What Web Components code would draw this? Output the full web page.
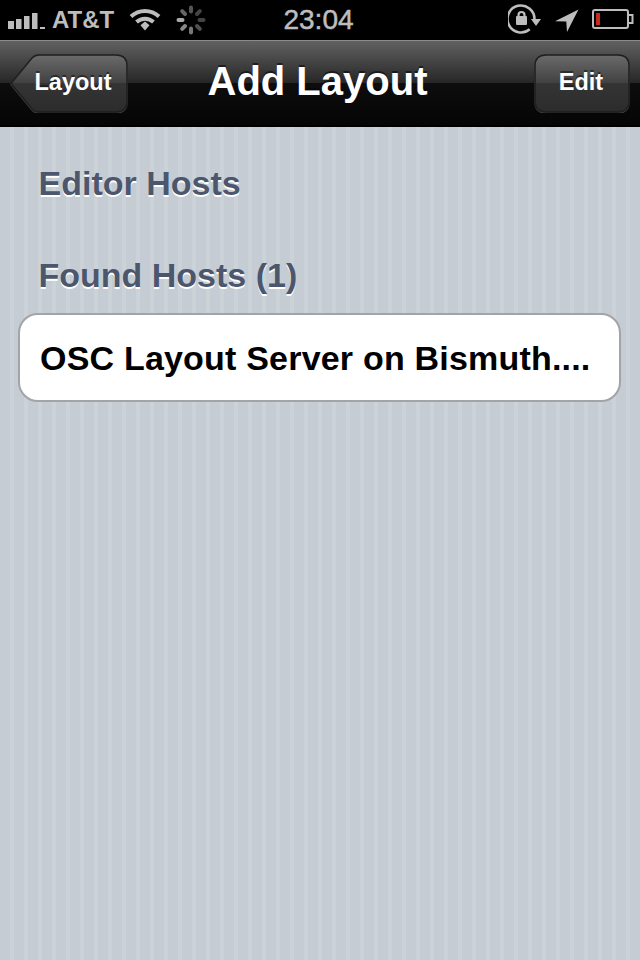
<!DOCTYPE html>
<html lang="en">
<head>
<meta charset="utf-8">
<title>Add Layout</title>
<style>
  html, body { margin: 0; background: #c5ccd4; font-family: "Liberation Sans", Arial, sans-serif; }
</style>
</head>
<body>
<app-screen>
  <status-bar carrier="AT&amp;T" time="23:04"></status-bar>
  <nav-bar heading="Add Layout">
    <bar-button slot="left" back>Layout</bar-button>
    <bar-button slot="right">Edit</bar-button>
  </nav-bar>
  <host-list>
    <section-header>Editor Hosts</section-header>
    <section-header>Found Hosts (1)</section-header>
    <table-cell>OSC Layout Server on Bismuth....</table-cell>
  </host-list>
</app-screen>

<script>
class AppScreen extends HTMLElement {
  constructor() {
    super();
    this.attachShadow({ mode: 'open' });
    this.shadowRoot.innerHTML = /* html */`
    <style>
      :host {
        display: flex;
        flex-direction: column;
        width: 640px;
        height: 960px;
        overflow: hidden;
      }
    </style>
    <slot></slot>`;
  }
}

class StatusBar extends HTMLElement {
  constructor() {
    super();
    this.attachShadow({ mode: 'open' });
  }

  connectedCallback() {
    this.render();
  }

  spinner() {
    const colors = ['#555', '#444', '#444', '#505050', '#777', '#888', '#aaa', '#666'];
    return colors.map((c, i) =>
      `<rect x="-2" y="-14.5" width="4" height="8" rx="2" fill="${c}" transform="rotate(${i * 45})"/>`
    ).join('');
  }

  render() {
    this.shadowRoot.innerHTML = /* html */`
    <style>
      :host {
        display: grid;
        grid-template-columns: 1fr auto 1fr;
        align-items: center;
        height: 40px;
        flex: none;
        background: #000;
        color: #bdbdbd;
      }
      .left, .right { display: flex; align-items: center; }
      .right { justify-content: flex-end; padding-right: 6px; }
      .carrier {
        font-size: 24px;
        font-weight: bold;
        margin-left: 7px;
        line-height: 40px;
      }
      .time {
        font-size: 28px;
        margin-right: 3px;
        line-height: 40px;
        -webkit-text-stroke: .5px #bdbdbd;
      }
      svg { display: block; flex: none; }
      .signal { margin: 2px 0 0 8px; }
      .wifi { margin-left: 15px; }
      .spin { margin-left: 15px; }
      .loc { margin-left: 11px; }
      .batt { margin: 0 0 2px 13px; }
    </style>
    <div class="left">
      <svg class="signal" width="37" height="16" viewBox="0 0 37 16" fill="#bdbdbd">
        <rect x="0" y="8" width="6" height="8"/>
        <rect x="8" y="6" width="5.5" height="10"/>
        <rect x="16" y="3" width="5.5" height="13"/>
        <rect x="24" y="0" width="5.5" height="16"/>
        <rect x="32" y="14" width="5.5" height="2"/>
      </svg>
      <span class="carrier">${this.getAttribute('carrier')}</span>
      <svg class="wifi" width="32" height="24" viewBox="0 0 32 24" fill="none" stroke="#bdbdbd" stroke-width="4">
        <path d="M2 8.5C10 1 22 1 30 8.5"/>
        <path d="M7.5 14C12.5 9.5 19.5 9.5 24.5 14"/>
        <path d="M11.5 17.2 16 13.6 20.5 17.2 16 22.4Z" fill="#bdbdbd" stroke="none"/>
      </svg>
      <svg class="spin" width="30" height="30" viewBox="-15 -15 30 30">${this.spinner()}</svg>
    </div>
    <span class="time">${this.getAttribute('time')}</span>
    <div class="right">
      <svg width="36" height="32" viewBox="0 0 36 32">
        <path d="M21.7 25.300A13.500 13.500 0 1 1 26.500 15" fill="none" stroke="#bdbdbd" stroke-width="2.600"/>
        <path d="M10.500 13V11a3 3 0 0 1 6 0V13" fill="none" stroke="#bdbdbd" stroke-width="2.200"/>
        <rect x="8" y="12" width="11" height="9" rx="1" fill="#bdbdbd"/>
        <path d="M23 15H33L28 22Z" fill="#bdbdbd"/>
      </svg>
      <svg class="loc" width="24" height="23" viewBox="0 0 24 23">
        <path d="M23.500 .5 0 12.300 11.300 12.500 12 23Z" fill="#bdbdbd"/>
      </svg>
      <svg class="batt" width="42" height="20" viewBox="0 0 42 20">
        <rect x="1" y="1" width="35" height="18" rx="2" fill="none" stroke="#bdbdbd" stroke-width="2"/>
        <path d="M37 6H40.500V14H37" fill="none" stroke="#bdbdbd" stroke-width="2"/>
        <rect x="4" y="4" width="4" height="12" fill="#c9291e"/>
      </svg>
    </div>`;
  }
}

class NavBar extends HTMLElement {
  constructor() {
    super();
    this.attachShadow({ mode: 'open' });
  }

  connectedCallback() {
    this.shadowRoot.innerHTML = /* html */`
    <style>
      :host {
        display: grid;
        grid-template-columns: 1fr auto 1fr;
        align-items: center;
        box-sizing: border-box;
        height: 87px;
        flex: none;
        padding: 13px 10px 12px;
        border-top: 1px solid #8c8c8c;
        border-bottom: 2px solid #000;
        background: linear-gradient(#616161 0, #262626 42px, #0d0d0d 42px, #050505 100%);
      }
      h1 {
        margin: 0 5px 5px 0;
        font-size: 40px;
        font-weight: bold;
        line-height: 48px;
        color: #fff;
        text-shadow: 0 -2px 0 rgba(0, 0, 0, .5);
      }
      .end { display: flex; justify-content: flex-end; }
    </style>
    <div><slot name="left"></slot></div>
    <h1>${this.getAttribute('heading')}</h1>
    <div class="end"><slot name="right"></slot></div>`;
  }
}

class BarButton extends HTMLElement {
  constructor() {
    super();
    this.attachShadow({ mode: 'open' });
  }

  connectedCallback() {
    const back = this.hasAttribute('back');
    const width = back ? 118 : 96;
    // back button has the pointed left edge
    const shape = back
      ? 'M29 1H106Q117 1 117 12V47Q117 58 106 58H29Q25 58 22 55L1 29.500 22 4Q25 1 29 1Z'
      : 'M12 1H84Q95 1 95 12V47Q95 58 84 58H12Q1 58 1 47V12Q1 1 12 1Z';
    const gid = back ? 'fillBack' : 'fillPlain';
    this.shadowRoot.innerHTML = /* html */`
    <style>
      :host {
        display: inline-flex;
        position: relative;
        box-sizing: border-box;
        align-items: center;
        justify-content: center;
        width: ${width}px;
        height: 59px;
        padding: 0 ${back ? 0 : 2}px 2px ${back ? 8 : 0}px;
        font-size: 23.5px;
        font-weight: bold;
        color: #fff;
        text-shadow: 0 -2px 0 rgba(0, 0, 0, .45);
      }
      svg { position: absolute; left: 0; top: 0; }
      span { position: relative; }
    </style>
    <svg width="${width}" height="59" viewBox="0 0 ${width} 59">
      <defs>
        <linearGradient id="${gid}" x1="0" y1="0" x2="0" y2="1">
          <stop offset="0" stop-color="#6b6b6b"/>
          <stop offset=".5" stop-color="#404040"/>
          <stop offset=".5" stop-color="#343434"/>
          <stop offset="1" stop-color="#2c2c2c"/>
        </linearGradient>
      </defs>
      <path d="${shape}" transform="translate(0 1)" fill="none" stroke="#5a5a5a" stroke-width="1.500" opacity=".7"/>
      <path d="${shape}" fill="url(#${gid})" stroke="#1f1f1f" stroke-width="1.500"/>
    </svg>
    <span><slot></slot></span>`;
  }
}

class HostList extends HTMLElement {
  constructor() {
    super();
    this.attachShadow({ mode: 'open' });
    this.shadowRoot.innerHTML = /* html */`
    <style>
      :host {
        display: flex;
        flex-direction: column;
        flex: 1;
        padding-top: 34px;
        background: repeating-linear-gradient(90deg, #c5ccd4 0, #c5ccd4 10px, #cbd2d8 10px, #cbd2d8 14px);
      }
    </style>
    <slot></slot>`;
  }
}

class SectionHeader extends HTMLElement {
  constructor() {
    super();
    this.attachShadow({ mode: 'open' });
    this.shadowRoot.innerHTML = /* html */`
    <style>
      :host {
        display: block;
        height: 46px;
        margin-bottom: 46px;
        padding-left: 38.5px;
        font-size: 34px;
        font-weight: bold;
        line-height: 44px;
        color: #4c566c;
        text-shadow: 0 2px 0 #fff;
      }
      :host(:nth-of-type(2)) { margin-bottom: 14px; }
    </style>
    <slot></slot>`;
  }
}

class TableCell extends HTMLElement {
  constructor() {
    super();
    this.attachShadow({ mode: 'open' });
    this.shadowRoot.innerHTML = /* html */`
    <style>
      :host {
        display: flex;
        align-items: center;
        box-sizing: border-box;
        width: 603px;
        height: 89px;
        margin-left: 18px;
        padding: 2px 19px 0 20px;
        border: 2px solid #a2a4a8;
        border-radius: 20px;
        background: #fff;
        color: #000;
        font-size: 34px;
        font-weight: bold;
        letter-spacing: .2px;
        white-space: nowrap;
      }
    </style>
    <slot></slot>`;
  }
}

customElements.define('app-screen', AppScreen);
customElements.define('status-bar', StatusBar);
customElements.define('nav-bar', NavBar);
customElements.define('bar-button', BarButton);
customElements.define('host-list', HostList);
customElements.define('section-header', SectionHeader);
customElements.define('table-cell', TableCell);
</script>
</body>
</html>
